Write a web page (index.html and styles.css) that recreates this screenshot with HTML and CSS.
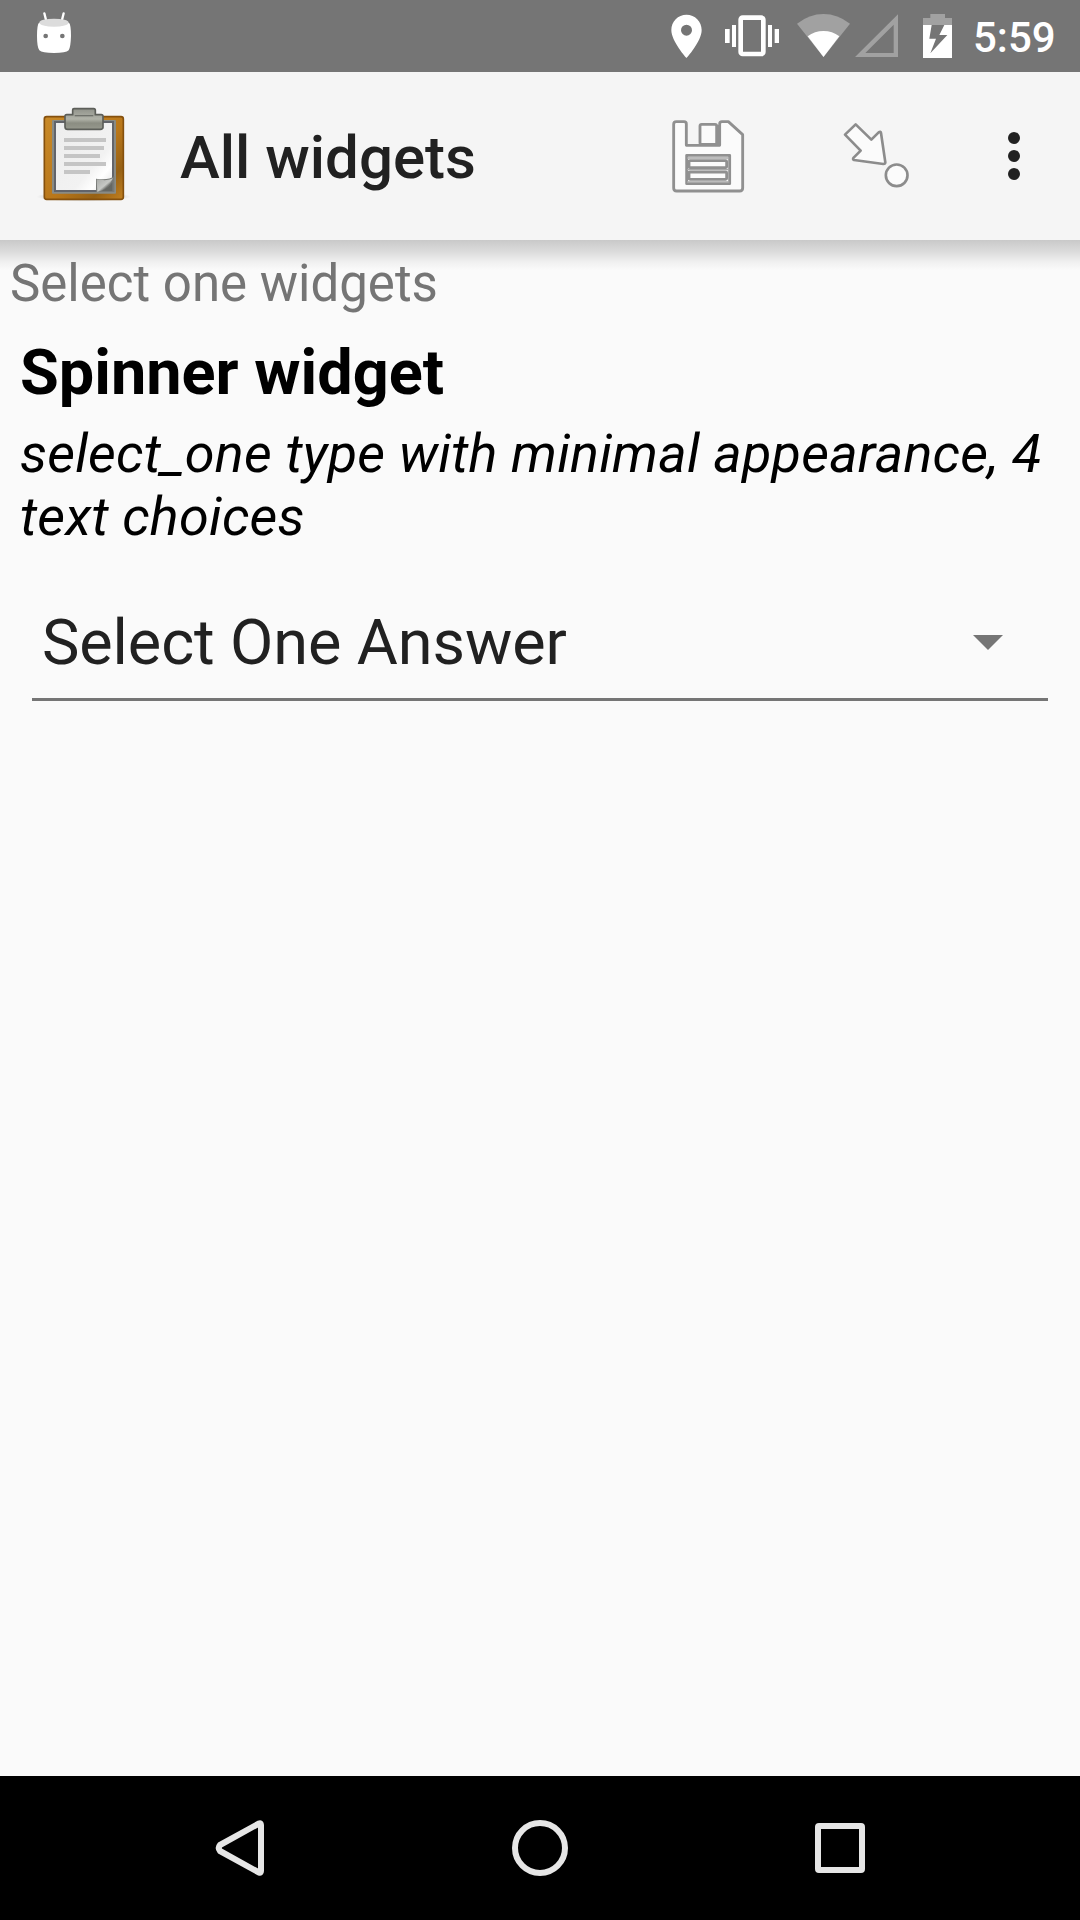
FILE: index.html
```html
<!DOCTYPE html>
<html lang="en">
<head>
<meta charset="utf-8">
<title>All widgets</title>
<link rel="stylesheet" href="styles.css">
</head>
<body>
<header class="status">
  <svg class="status-robot" width="40" height="72" viewBox="102 0 120 216">
    <path d="M133 40L139 64M191 40L185 64" stroke="#fff" stroke-width="7" stroke-linecap="round"/>
    <path d="M117 68Q162 84 207 68Q213 74 213 108Q212 142 206 151Q198 159 162 159Q126 159 118 151Q111 142 111 108Q111 74 117 68Z" fill="#fff"/>
    <ellipse cx="162" cy="68" rx="44" ry="12" fill="#dcdcdc"/>
    <circle cx="137" cy="108" r="7" fill="#757575"/><circle cx="187" cy="108" r="7" fill="#757575"/>
  </svg>
  <svg class="status-pin" width="34" height="72" viewBox="60 0 102 216">
    <path fill="#fff" fill-rule="evenodd" d="M109.500 44C84 44 64 64 64 90C64 124 109.500 174 109.500 174S155 124 155 90C155 64 135 44 109.500 44ZM109.500 74a16.500 16.500 0 1 1 0 33a16.500 16.500 0 1 1 0-33Z"/>
  </svg>
  <svg class="status-vibrate" width="56" height="72" viewBox="222 0 168 216">
    <rect x="272" y="53" width="68" height="109" rx="6" fill="none" stroke="#fff" stroke-width="14"/>
    <path fill="#fff" d="M225 87h14v42h-14zM246 75h12v66h-12zM354 75h12v66h-12zM374 87h13v42h-13z"/>
  </svg>
  <svg class="status-wifi" width="55" height="72" viewBox="438 0 165 216">
    <path fill="#a1a1a1" d="M520.500 171L441 71Q478 42 520.500 42T600 71Z"/>
    <path fill="#fff" d="M520.500 171L473 109Q494 93 520.500 93T568 109Z"/>
  </svg>
  <svg class="status-signal" width="43" height="72" viewBox="-15 0 129 216">
    <path fill="#a1a1a1" fill-rule="evenodd" d="M-15 171L114 43V171ZM16 159H101V74Z"/>
  </svg>
  <svg class="status-battery" width="31" height="72" viewBox="186 0 93 216">
    <path fill="#a1a1a1" d="M189 75V54H211V42H255V54H276V75Z"/>
    <path fill="#fff" fill-rule="evenodd" d="M189 75H276V174H189ZM215 75L208 116H228L211 160L262 105H238L253 75Z"/>
  </svg>
  <span class="clock">5:59</span>
</header>
<div class="appbar">
  <svg class="logo" width="130" height="130" viewBox="0 0 390 390">
    <defs>
      <linearGradient id="wood" x2="1" y2="1"><stop stop-color="#c98a28"/><stop offset=".55" stop-color="#b9771a"/><stop offset=".8" stop-color="#966115"/><stop offset="1" stop-color="#c28020"/></linearGradient>
      <linearGradient id="paper" x2="1" y2="1"><stop stop-color="#ededed"/><stop offset=".65" stop-color="#f2f2f2"/><stop offset=".8" stop-color="#fff"/><stop offset="1" stop-color="#ddd"/></linearGradient>
      <linearGradient id="clip" x2="0" y2="1"><stop stop-color="#90928a"/><stop offset=".5" stop-color="#b1b3a9"/><stop offset=".7" stop-color="#8b8d82"/><stop offset="1" stop-color="#96988d"/></linearGradient>
      <linearGradient id="fold" x2="1" y2="1"><stop stop-color="#a9aba8"/><stop offset=".5" stop-color="#c6c8c5"/><stop offset=".65" stop-color="#6d6f6b"/><stop offset="1" stop-color="#555"/></linearGradient>
      <radialGradient id="ground"><stop stop-color="#000" stop-opacity=".25"/><stop offset=".75" stop-color="#000" stop-opacity=".1"/><stop offset="1" stop-color="#000" stop-opacity="0"/></radialGradient>
    </defs>
    <ellipse cx="191" cy="320" rx="142" ry="15" fill="url(#ground)"/>
    <rect x="73" y="80" width="237" height="248" rx="7" fill="url(#wood)" stroke="#85500d" stroke-width="5"/>
    <rect x="96" y="90" width="192" height="221" rx="3" fill="#898b85"/>
    <rect x="105" y="96" width="174" height="207" fill="url(#paper)" stroke="#62646a" stroke-width="6"/>
    <path fill="#c5c5c5" d="M132 144h126v12H132zM132 168h120v12H132zM132 192h108v12H132zM132 216h126v12H132zM132 240h78v12H132z"/>
    <path fill="#777976" d="M228 266Q266 272 283 258V306H228Z"/>
    <path fill="url(#fold)" d="M230 268Q264 274 279 265Q264 300 232 306Z"/>
    <path fill="#656763" d="M245 303Q266 294 277 277V303Z"/>
    <path d="M140 74H158V60Q158 56 162 56H221Q226 56 226 61V74H244Q249 74 249 79V112Q249 118 241 118H143Q135 118 135 110V79Q135 74 140 74Z" fill="url(#clip)" stroke="#5c5e59" stroke-width="5"/>
    <path d="M164 77H220" stroke="#6f716b" stroke-width="4"/>
  </svg>
  <h1 class="title">All widgets</h1>
  <svg class="save" width="120" height="110" viewBox="0 0 360 330">
    <g fill="#fbfbfb" stroke="#909090" stroke-width="8.500" stroke-linejoin="round">
      <path d="M79 65H102Q109 65 109 72V136H209V72Q209 65 216 65H235L278 104V264Q278 273 269 273H80Q71 273 71 264V73Q71 65 79 65Z"/>
      <rect x="150" y="73" width="50" height="60" rx="5"/>
      <path d="M204 75V134" stroke-width="12"/>
      <rect x="110" y="166" width="129" height="85"/>
      <rect x="117" y="182" width="113" height="21" rx="3"/><rect x="117" y="216" width="113" height="22" rx="3"/>
      <path d="M111 174H238M111 209H238M111 246H238" stroke="#a8a8a8" stroke-width="4"/>
    </g>
  </svg>
  <svg class="jump" width="80" height="110" viewBox="60 0 240 330">
    <g fill="#fbfbfb" stroke="#8c8c8c" stroke-width="8" stroke-linejoin="round">
      <path d="M107 73L154 119L176 97Q182 93 183 99L196 187Q196 192 190 192L102 180Q97 178 101 173L122 152L75 104Z"/>
      <circle cx="230" cy="226" r="32.500"/>
    </g>
  </svg>
  <svg class="more" width="12" height="48" viewBox="0 0 12 48"><g fill="#212121"><circle cx="6" cy="6" r="6"/><circle cx="6" cy="24" r="6"/><circle cx="6" cy="42" r="6"/></g></svg>
</div>
<main class="form">
  <p class="group">Select one widgets</p>
  <h2 class="question">Spinner widget</h2>
  <p class="hint">select_one type with minimal appearance, 4 text choices</p>
  <div class="spinner">
    <span>Select One Answer</span>
    <svg width="30" height="15" viewBox="0 0 30 15"><path fill="#757575" d="M0 0H30L15 15Z"/></svg>
  </div>
</main>
<nav class="navbar">
  <svg width="56" height="56" viewBox="212 1820 56 56"><path d="M220 1845L259 1823.500Q261 1822.500 261 1825V1871Q261 1873.500 259 1872.500L220 1851Q217.500 1848 220 1845Z" fill="none" stroke="#e6e6e6" stroke-width="6" stroke-linejoin="round"/></svg>
  <svg width="56" height="56" viewBox="0 0 56 56"><circle cx="28" cy="28" r="25" fill="none" stroke="#e6e6e6" stroke-width="6"/></svg>
  <svg width="56" height="56" viewBox="0 0 56 56"><rect x="6" y="6" width="44" height="44" rx="1" fill="none" stroke="#e6e6e6" stroke-width="6" stroke-linejoin="round"/></svg>
</nav>
</body>
</html>
```
FILE: styles.css
```css
* { box-sizing: border-box; margin: 0; padding: 0; }
body {
  width: 1080px;
  height: 1920px;
  display: flex;
  flex-direction: column;
  overflow: hidden;
  background: #fafafa;
  font-family: Roboto, sans-serif;
}
svg { display: block; flex: none; }

.status {
  height: 72px;
  flex: none;
  display: flex;
  background: #757575;
  padding-left: 34px;
}
.status-pin { margin-left: 596px; }
.status-vibrate { margin-left: 20px; }
.status-wifi { margin-left: 16px; }
.status-signal { margin-left: 4px; }
.status-battery { margin-left: 24px; }
.clock {
  margin-left: 20px;
  color: #fff;
  font-size: 42px;
  font-weight: 500;
  line-height: 76px;
}

.appbar {
  height: 168px;
  flex: none;
  display: flex;
  background: #f5f5f5;
  padding-left: 20px;
}
.logo { margin-top: 18px; }
.title {
  width: 470px;
  margin: 51px 0 0 30px;
  color: #212121;
  font-size: 60px;
  font-weight: 500;
  line-height: 70px;
}
.save { margin-top: 28px; }
.jump { margin: 28px 0 0 70px; }
.more { margin: 60px 0 0 88px; }

.form {
  flex: 1;
  padding-top: 14px;
  background: linear-gradient(#c9c9c9, #dcdcdc 12px, #f0f0f0 22px, #fafafa 30px);
}
.group {
  margin-left: 10px;
  color: #757575;
  font-size: 51px;
  line-height: 60px;
}
.question {
  margin: 22px 0 0 20px;
  color: #000;
  font-size: 63px;
  font-weight: 700;
  line-height: 74px;
}
.hint {
  margin: 12px 10px 0 20px;
  color: #000;
  font-size: 54px;
  font-style: italic;
  line-height: 63px;
  letter-spacing: 0.19px;
}
.spinner {
  display: flex;
  justify-content: space-between;
  align-items: flex-start;
  height: 153px;
  margin: 0 32px;
  padding: 58px 45px 0 10px;
  border-bottom: 3px solid #757575;
  color: #212121;
  font-size: 63px;
  line-height: 74px;
  letter-spacing: -0.1px;
}
.spinner svg { margin-top: 29px; }

.navbar {
  height: 144px;
  flex: none;
  display: flex;
  justify-content: space-between;
  align-items: center;
  padding: 0 212px;
  background: #000;
}
```
